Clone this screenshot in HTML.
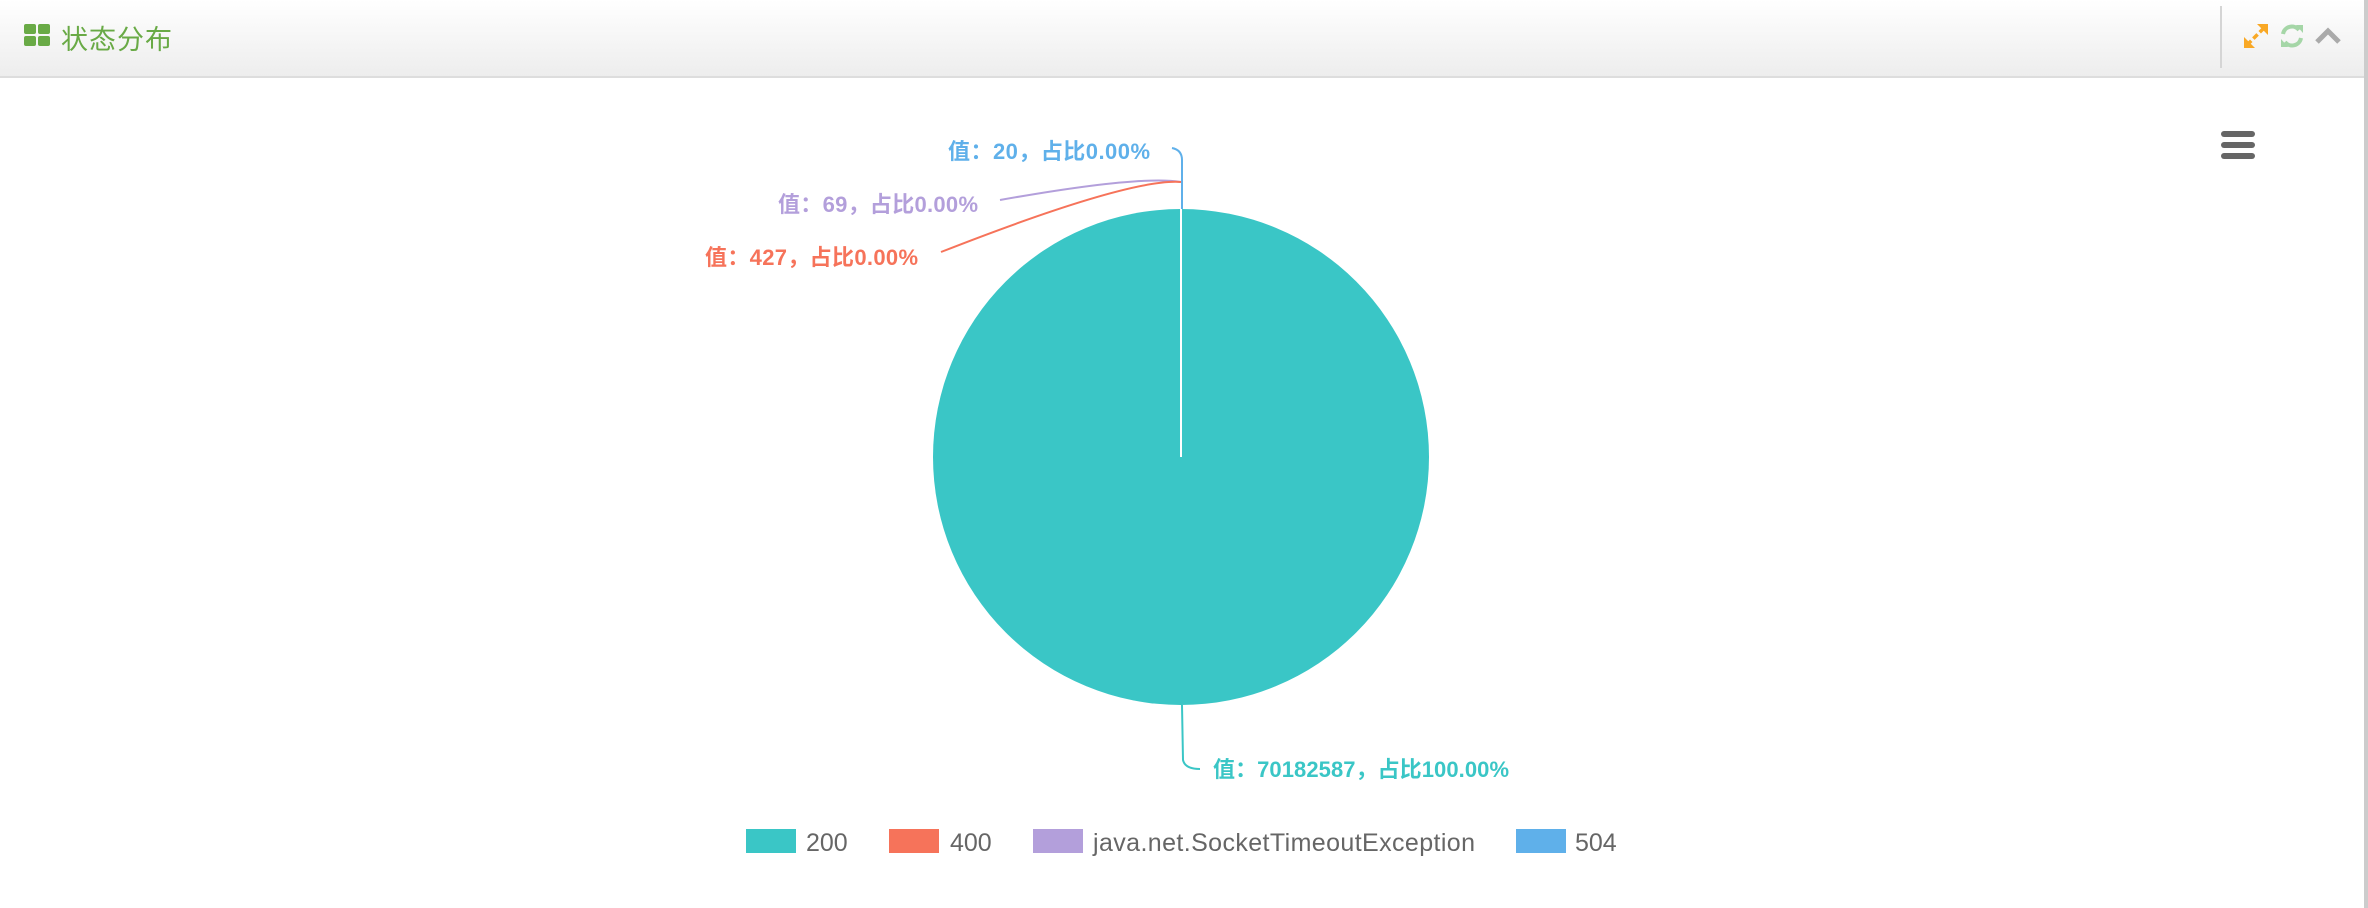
<!DOCTYPE html>
<html><head><meta charset="utf-8"><style>
html,body{margin:0;padding:0;width:2368px;height:908px;overflow:hidden;background:#fff;font-family:"Liberation Sans","Noto Sans CJK SC",sans-serif}
.hdr{position:absolute;left:0;top:0;width:2364px;height:76px;background:linear-gradient(#fff,#ededed);border-bottom:2px solid #ddd}
.rb{position:absolute;left:2364px;top:0;width:4px;height:908px;background:#ccc}
.sep{position:absolute;left:2220px;top:6px;width:2px;height:62px;background:#d5d5d5}
.title{position:absolute;left:61px;top:18px;font-size:27px;color:#69aa46;letter-spacing:1px}
</style></head><body>
<div class="hdr">
 <svg style="position:absolute;left:24px;top:24px" width="27" height="22"><g fill="#69aa46"><rect x="0" y="0" width="12" height="10" rx="2"/><rect x="14" y="0" width="12" height="10" rx="2"/><rect x="0" y="12" width="12" height="10" rx="2"/><rect x="14" y="12" width="12" height="10" rx="2"/></g></svg>
 <div class="title">状态分布</div>
 <div class="sep"></div>
 <svg style="position:absolute;left:2242px;top:22px" width="28" height="28" viewBox="0 0 28 28"><g fill="#f9a825" stroke="#f9a825"><line x1="5" y1="23" x2="23" y2="5" stroke-width="3.5" stroke-dasharray="6 3"/><path d="M15 2h11v11z" stroke="none"/><path d="M2 15v11h11z" stroke="none"/></g></svg>
 <svg style="position:absolute;left:2278px;top:22px" width="28" height="28" viewBox="0 0 28 28"><g fill="none" stroke="#a5d6a7" stroke-width="4"><path d="M5 12a9 9 0 0 1 16-4"/><path d="M23 16a9 9 0 0 1-16 4"/></g><path d="M18 3l7 0 0 8z" fill="#a5d6a7"/><path d="M10 25l-7 0 0-8z" fill="#a5d6a7"/></svg>
 <svg style="position:absolute;left:2314px;top:26px" width="28" height="20" viewBox="0 0 28 20"><path d="M3 16L14 5l11 11" fill="none" stroke="#aaa" stroke-width="5"/></svg>
</div>
<div class="rb"></div>
<svg style="position:absolute;left:2221px;top:131px" width="34" height="28"><g fill="#666"><rect x="0" y="0" width="34" height="6" rx="3"/><rect x="0" y="11" width="34" height="6" rx="3"/><rect x="0" y="22" width="34" height="6" rx="3"/></g></svg>
<svg style="position:absolute;left:0;top:0" width="2360" height="908">
 <circle cx="1181" cy="457" r="248" fill="#3ac6c6"/>
 <line x1="1181" y1="209" x2="1181" y2="457" stroke="#fff" stroke-width="2"/>
 <path d="M1172 148 Q1182 150 1182 160 L1182 209" fill="none" stroke="#5fb0ea" stroke-width="2"/>
 <path d="M1000 200 Q1140 175 1181 182" fill="none" stroke="#b39fdb" stroke-width="2"/>
 <path d="M941 252 Q1130 178 1181 182" fill="none" stroke="#f6735a" stroke-width="2"/>
 <path d="M1182 705 L1183 760 Q1185 769 1200 769" fill="none" stroke="#3ac6c6" stroke-width="2"/>
 <g font-family="Liberation Sans,Noto Sans CJK SC,sans-serif" font-size="22" font-weight="bold">
  <text x="1150" y="159" text-anchor="end" fill="#5fb0ea" textLength="202">值：20，占比0.00%</text>
  <text x="978" y="212" text-anchor="end" fill="#b39fdb" textLength="200">值：69，占比0.00%</text>
  <text x="918" y="265" text-anchor="end" fill="#f6735a" textLength="213">值：427，占比0.00%</text>
  <text x="1213" y="777" fill="#3ac6c6" textLength="296">值：70182587，占比100.00%</text>
 </g>
 <g font-family="Liberation Sans,sans-serif" font-size="25" fill="#666">
  <rect x="746" y="829" width="50" height="24" fill="#3ac6c6"/><text x="806" y="851">200</text>
  <rect x="889" y="829" width="50" height="24" fill="#f6735a"/><text x="950" y="851">400</text>
  <rect x="1033" y="829" width="50" height="24" fill="#b39fdb"/><text x="1093" y="851" textLength="382">java.net.SocketTimeoutException</text>
  <rect x="1516" y="829" width="50" height="24" fill="#5fb0ea"/><text x="1575" y="851">504</text>
 </g>
</svg>
</body></html>
